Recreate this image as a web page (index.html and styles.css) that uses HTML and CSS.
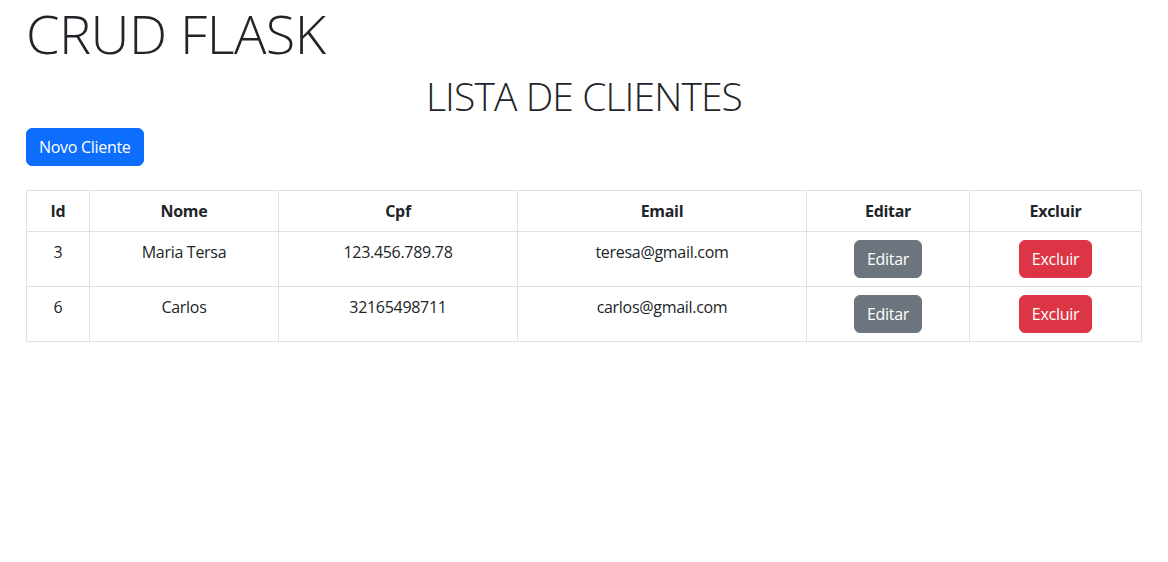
FILE: index.html
```html
<!DOCTYPE html>
<html lang="pt-BR">
<head>
<meta charset="utf-8">
<title>CRUD FLASK</title>
<link rel="stylesheet" href="styles.css">
</head>
<body>
<div class="container">
  <h1 class="title">CRUD FLASK</h1>
  <h2 class="subtitle">LISTA DE CLIENTES</h2>
  <a class="btn btn-primary" href="#">Novo Cliente</a>
  <table class="table">
    <thead>
      <tr>
        <th class="c-id">Id</th>
        <th class="c-nome">Nome</th>
        <th class="c-cpf">Cpf</th>
        <th class="c-email">Email</th>
        <th class="c-edit">Editar</th>
        <th>Excluir</th>
      </tr>
    </thead>
    <tbody>
      <tr>
        <td>3</td>
        <td>Maria Tersa</td>
        <td>123.456.789.78</td>
        <td>teresa@gmail.com</td>
        <td><a class="btn btn-secondary" href="#">Editar</a></td>
        <td><a class="btn btn-danger" href="#">Excluir</a></td>
      </tr>
      <tr>
        <td>6</td>
        <td>Carlos</td>
        <td>32165498711</td>
        <td>carlos@gmail.com</td>
        <td><a class="btn btn-secondary" href="#">Editar</a></td>
        <td><a class="btn btn-danger" href="#">Excluir</a></td>
      </tr>
    </tbody>
  </table>
</div>
</body>
</html>
```
FILE: styles.css
```css
* { box-sizing: border-box; }
html, body { margin: 0; padding: 0; background: #fff; }
body {
  font-family: "Open Sans", "Noto Sans", sans-serif;
  font-size: 16px;
  line-height: 1.5;
  color: #212529;
}
.container {
  padding: 0 26px;
}
.title {
  margin: 0;
  font-weight: 300;
  font-size: 54px;
  line-height: 66px;
  letter-spacing: -0.5px;
}
.subtitle {
  margin: 5px 0 7px;
  text-align: center;
  font-weight: 300;
  font-size: 39px;
  line-height: 50px;
  letter-spacing: -0.9px;
}
.btn {
  display: inline-block;
  padding: 6px 12px;
  font-size: 16px;
  line-height: 24px;
  border: 1px solid transparent;
  border-radius: 6px;
  text-decoration: none;
  color: #fff;
  letter-spacing: -0.3px;
}
.btn-primary { background: #0d6efd; border-color: #0d6efd; }
.btn-secondary { background: #6c757d; border-color: #6c757d; }
.btn-danger { background: #dc3545; border-color: #dc3545; }
.table {
  width: 100%;
  margin-top: 24px;
  border-collapse: collapse;
  border: 1px solid #dee2e6;
}
.table th, .table td {
  border: 1px solid #dee2e6;
  padding: 8px;
  text-align: center;
  vertical-align: top;
  letter-spacing: -0.3px;
}
.table th { font-weight: 700; }
.c-id { width: 63px; }
.c-nome { width: 189px; }
.c-cpf { width: 239px; }
.c-email { width: 289px; }
.c-edit { width: 163px; }
```
